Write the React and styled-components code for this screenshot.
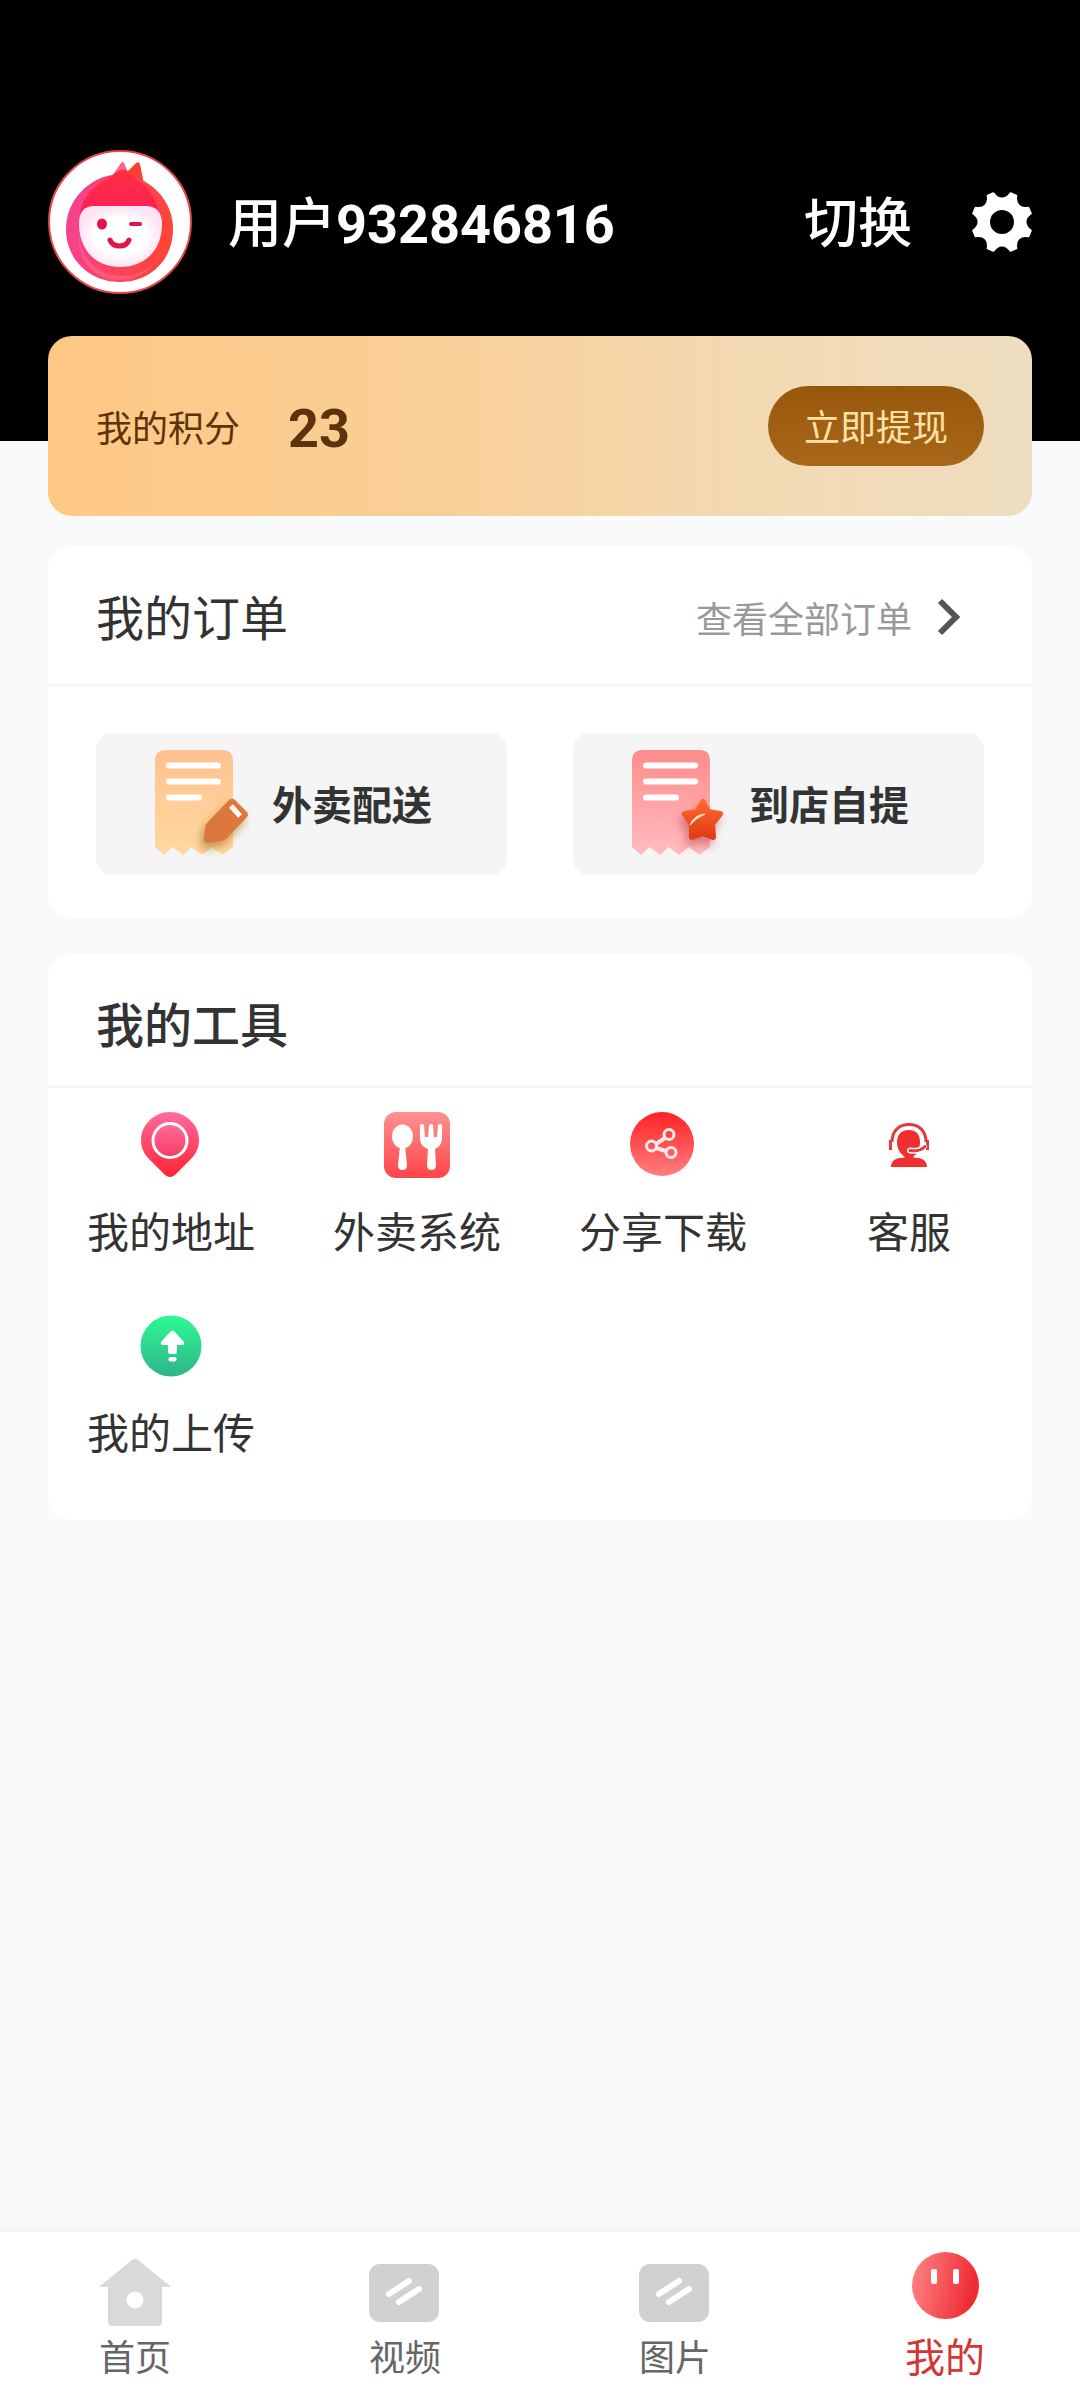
import React, {useState} from 'react';
import styled, {createGlobalStyle, css} from 'styled-components';

const colors = {
	page: '#f8fafc',
	card: '#fff',
	text: '#333',
	muted: '#999',
	tab: '#666',
	active: '#d43535',
	line: '#f5f5f5'
};

const GlobalStyle = createGlobalStyle`
	* {
		box-sizing: border-box;
	}
	body {
		margin: 0;
		background: ${colors.page};
		color: ${colors.text};
		font-family: Roboto, 'Noto Sans CJK SC', sans-serif;
	}
	button {
		padding: 0;
		border: 0;
		background: none;
		color: inherit;
		font: inherit;
		cursor: pointer;
	}
	svg {
		display: block;
		flex-shrink: 0;
	}
`;

const Page = styled.div`
	display: flex;
	flex-direction: column;
	min-height: 100vh;
`;

const Header = styled.header`
	display: flex;
	align-items: center;
	padding: 150px 48px 147px;
	background: #000;
	color: #fff;
	font-size: 54px;
	font-weight: 500;
	line-height: 72px;
`;

const UserName = styled.h1`
	flex: 1;
	margin: 0 0 0 36px;
	padding-top: 6px;
	font-size: inherit;
	font-weight: inherit;
`;

const Digits = styled.span`
	font-weight: 700;
`;

const SwitchButton = styled.button`
	padding-top: 6px;
`;

const SettingsButton = styled.button`
	margin-left: 60px;
`;

const Main = styled.main`
	flex: 1;
	margin-top: -105px;
	padding: 0 48px 48px;
`;

const Points = styled.section`
	display: flex;
	align-items: center;
	height: 180px;
	padding: 0 48px;
	border-radius: 24px;
	background: linear-gradient(90deg, #ffc884, #f9cf97 40%, #f3d9b1 70%, #eeddc0);
	color: #5c330a;
	font-size: 36px;
`;

const PointsValue = styled.strong`
	flex: 1;
	margin-left: 48px;
	padding-top: 4px;
	font-size: 54px;
	font-weight: 700;
`;

const CashOut = styled.button`
	height: 80px;
	padding: 0 36px 2px;
	border-radius: 40px;
	background: linear-gradient(#98570b, #a8671a);
	color: #ffe1a8;
`;

const Card = styled.section`
	margin-top: ${props => props.$gap}px;
	border-radius: 24px;
	background: ${colors.card};
`;

const CardHead = styled.div`
	display: flex;
	align-items: center;
	justify-content: space-between;
	padding: ${props => props.$compact ? '37px 72px 22px 48px' : '38px 72px 28px 48px'};
	border-bottom: 3px solid ${colors.line};
`;

const CardTitle = styled.h2`
	margin: 0;
	font-size: 48px;
	font-weight: ${props => props.$strong ? 500 : 400};
	line-height: 72px;
`;

const MoreLink = styled.a`
	display: flex;
	align-items: center;
	gap: 24px;
	padding-bottom: 6px;
	color: ${colors.muted};
	font-size: 36px;
	text-decoration: none;
`;

const Orders = styled.div`
	display: grid;
	grid-template-columns: 1fr 1fr;
	gap: 66px;
	padding: 46px 48px 43px;
`;

const OrderButton = styled.button`
	display: flex;
	align-items: center;
	gap: 22px;
	height: 142px;
	padding: 0 0 2px 58px;
	border-radius: 16px;
	background: ${colors.line};
	font-size: 40px;
	font-weight: 700;
`;

const Tools = styled.div`
	display: grid;
	grid-template-columns: repeat(4, 1fr);
	padding-bottom: 30px;
`;

const ToolButton = styled.button`
	display: flex;
	flex-direction: column;
	align-items: center;
	gap: 26px;
	padding: 24px 0 25px;
	font-size: 42px;
	line-height: 60px;
`;

const TabBar = styled.nav`
	position: sticky;
	bottom: 0;
	display: grid;
	grid-template-columns: repeat(4, 1fr);
	background: ${colors.card};
	box-shadow: 0 0 9px rgba(0, 0, 0, 0.08);
`;

const Tab = styled.button`
	display: flex;
	flex-direction: column;
	align-items: center;
	gap: 2px;
	padding: 18px 0 14px;
	color: ${colors.tab};
	font-size: 36px;
	line-height: 54px;

	${props => props.$active && css`
		color: ${colors.active};
		font-size: 40px;
	`}
`;

const Gradient = ({id, from, to, across}) => (
	<linearGradient id={id} x1="0" y1="0" x2={across ? 1 : 0} y2={across ? 0.2 : 1}>
		<stop offset="0" stopColor={from}/>
		<stop offset="1" stopColor={to}/>
	</linearGradient>
);

const Avatar = () => (
	<svg width="144" height="144" viewBox="0 0 144 144" role="img" aria-label="头像">
		<defs>
			<Gradient id="ring" from="#f5429a" to="#ff4438" across/>
			<Gradient id="hair" from="#ff3040" to="#fb1f56"/>
			<radialGradient id="face">
				<stop offset="0.6" stopColor="#fff"/>
				<stop offset="1" stopColor="#ffe3f4"/>
			</radialGradient>
		</defs>
		<circle cx="72" cy="72" r="71" fill="#fff" stroke="#e0474a" strokeWidth="2"/>
		<path d="M62 29 73 13q2-2 3 0l7 16z" fill="#f8688c"/>
		<path d="M77 24 88 13q3-2 4 1l4 20-18-4z" fill="#fb3f31"/>
		<path d="M71 24c31 2 54 26 54 55 0 31-23 53-53 53S18 110 18 79c0-29 23-53 53-55z" fill="url(#ring)"/>
		<path d="M31 84c2 29 22 42 44 42 18 0 32-10 39-25-8 20-26 29-43 29-24 0-42-19-40-46z" fill="#ff6f93" opacity="0.5"/>
		<path d="M32 64C36 40 52 34 63 26c6-4 11-9 16-5 7 8 28 16 32 43z" fill="url(#hair)"/>
		<path d="M46 56h52c10 0 16 6 16 18 0 26-17 43-42 43S31 99 31 74c0-12 5-18 15-18z" fill="url(#face)"/>
		<ellipse cx="54" cy="74" rx="5" ry="5.500" fill="#e2144a"/>
		<path d="M83 74h9" stroke="#e2144a" strokeWidth="4" strokeLinecap="round"/>
		<path d="M62 90c3 8 16 8 19 0" fill="none" stroke="#e2144a" strokeWidth="5" strokeLinecap="round"/>
	</svg>
);

const polar = (radius, degrees) => {
	const a = degrees * Math.PI / 180;
	return `${(30 + radius * Math.cos(a)).toFixed(2)} ${(30 + radius * Math.sin(a)).toFixed(2)}`;
};

// eight teeth with a rounded dip between each pair
const gearPath = [0, 1, 2, 3, 4, 5, 6, 7].map(i => {
	const mid = 22.5 + i * 45;
	return `${i ? 'L' : 'M'}${polar(30, mid - 6)}L${polar(30, mid + 6)}C${polar(22, mid + 13)} ${polar(22, mid + 32)} ${polar(30, mid + 39)}`;
}).join('') + 'z';

const GearIcon = () => (
	<svg width="60" height="60" viewBox="0 0 60 60">
		<path d={gearPath} fill="#fff" stroke="#fff" strokeWidth="2" strokeLinejoin="round"/>
		<circle cx="30" cy="30" r="12" fill="#000"/>
	</svg>
);

const ChevronIcon = () => (
	<svg width="24" height="38" viewBox="0 0 24 38">
		<path d="M4 3l16 16L4 35" fill="none" stroke="#555" strokeWidth="6"/>
	</svg>
);

const Receipt = ({id, from, to, shadow, children}) => (
	<svg width="96" height="110" viewBox="0 0 96 110">
		<defs>
			<Gradient id={id} from={from} to={to}/>
			<filter id={`${id}Shadow`} x="-50%" y="-50%" width="200%" height="200%">
				<feDropShadow dx="-3" dy="6" stdDeviation="5" floodColor={shadow} floodOpacity="0.6"/>
			</filter>
		</defs>
		<path
			d="M12 2h56q11 0 11 11v86l-10.500 8L58 99l-10 8-10.500-8-8.500 8-10.500-8-8.500 8-9-8V13Q1 2 12 2z"
			fill={`url(#${id})`}
		/>
		<path d="M15 17.500h49M15 33.500h49M15 49.500h30" stroke="#fff" strokeWidth="6" strokeLinecap="round"/>
		<g filter={`url(#${id}Shadow)`}>{children}</g>
	</svg>
);

const DeliveryIcon = () => (
	<Receipt id="delivery" from="#ffc18e" to="#ffd9a2" shadow="#a06a10">
		<defs>
			<Gradient id="pencil" from="#d9743f" to="#de7a3c" across/>
		</defs>
		<path d="M75 52q3-3 6 0l12 12q2 3 0 5L73 90q-2 2-5 3l-14 2q-4 0-4-4l1-11q0-3 3-6z" fill="url(#pencil)"/>
		<path d="M77 58l9 10" stroke="#fff" strokeWidth="5"/>
	</Receipt>
);

const PickupIcon = () => (
	<Receipt id="pickup" from="#ff8b8b" to="#ffbcc0" shadow="#c04450">
		<defs>
			<Gradient id="star" from="#fa6a2a" to="#e23c17"/>
		</defs>
		<path
			d="M72 54l5 10 12 2-8 10 1 13-10-4-11 4 0-13-7-10 12-2z"
			fill="#ee5220"
			stroke="url(#star)"
			strokeWidth="6"
			strokeLinejoin="round"
		/>
		<path d="M72 54l5 10 12 2-8 10 1 13-10-4-11 4 0-13-7-10 12-2z" fill="url(#star)"/>
		<path d="M59 77q4-10 15-11-9 4-15 11z" fill="#ffe9e0" stroke="#ffd5c5"/>
	</Receipt>
);

const AddressIcon = () => (
	<svg width="66" height="66" viewBox="0 0 66 66">
		<defs>
			<Gradient id="pin" from="#ff6ba0" to="#ff2530"/>
			<Gradient id="pinDot" from="#ff6d99" to="#f43c62"/>
		</defs>
		<path d="M32 0c16 0 29 13 29 28 0 9-4 15-9 20L37 63q-5 4-10 0L12 48C6 42 3 36 3 28 3 13 16 0 32 0z" fill="url(#pin)"/>
		<circle cx="32" cy="28.500" r="17" fill="url(#pinDot)" stroke="#fff" strokeWidth="3"/>
	</svg>
);

const TakeoutIcon = () => (
	<svg width="66" height="66" viewBox="0 0 66 66">
		<defs>
			<Gradient id="takeout" from="#ff9292" to="#ff4548"/>
		</defs>
		<rect width="66" height="66" rx="12" fill="url(#takeout)"/>
		<ellipse cx="18.500" cy="24.500" rx="10.500" ry="12" fill="#fff"/>
		<path d="M16 34h5l2 19q0 5-4.500 5t-4.500-5z" fill="#fff"/>
		<path d="M36 13q2-2 4 0l1 12h3l1-12q2-2 4 0l1 12h3l1-12q2-2 4 0v13c0 6-3 9-7 11l1 16q0 5-4.500 5t-4.500-5l1-16c-5-2-8-5-8-11z" fill="#fff"/>
	</svg>
);

const ShareIcon = () => (
	<svg width="66" height="66" viewBox="0 0 66 66">
		<defs>
			<Gradient id="share" from="#ff2226" to="#ff7e80"/>
		</defs>
		<circle cx="32" cy="32" r="32" fill="url(#share)"/>
		<g fill="none" stroke="#ffe9e9" strokeWidth="3">
			<path d="M26 32l9-6M26 36l10 3" strokeWidth="4"/>
			<circle cx="39" cy="22.500" r="5"/>
			<circle cx="21.500" cy="34" r="5"/>
			<circle cx="41" cy="40.500" r="5"/>
		</g>
	</svg>
);

const ServiceIcon = () => (
	<svg width="66" height="66" viewBox="0 0 66 66">
		<path d="M16 30C16 19 23 12.500 33 12.500S50 19 50 30" fill="none" stroke="#e23b3b" strokeWidth="3"/>
		<path d="M14.500 28v10M51.500 28v10" stroke="#d84040" strokeWidth="3"/>
		<path d="M21 30c0-8 5-12 12-12s11 4 11 12c0 8-3 12-7 15 1 1 4 1 6 1 5 1 8 4 8 9H15c0-5 3-8 8-9 2 0 5 0 6-1-4-3-8-7-8-15z" fill="#f03030"/>
		<path d="M34 38.500c6 1 11 0 14-4" fill="none" stroke="#fff" strokeWidth="6" strokeLinecap="round"/>
		<path d="M34 38.500c6 1 11 0 15-4" fill="none" stroke="#e23b3b" strokeWidth="3" strokeLinecap="round"/>
	</svg>
);

const UploadIcon = () => (
	<svg width="66" height="66" viewBox="0 0 66 66">
		<defs>
			<Gradient id="upload" from="#2dfa92" to="#2fb48a"/>
		</defs>
		<circle cx="33" cy="33" r="30.500" fill="url(#upload)"/>
		<path d="M33 18q1.500-1 3 0l10 11q1 3-2 3h-5v7q0 2-2 2h-5q-2 0-2-2v-7h-5q-3 0-2-3z" fill="#fff"/>
		<rect x="30.500" y="44" width="8" height="4.500" rx="2" fill="#fff"/>
	</svg>
);

const HomeIcon = () => (
	<svg width="80" height="80" viewBox="0 0 80 80">
		<path d="M37 10q3-2 6 0l32 26v1h-8v35q0 4-4 4H17q-4 0-4-4V37H5v-1z" fill="#d9d9d9"/>
		<circle cx="40" cy="50" r="8.500" fill="#fff"/>
	</svg>
);

const MediaIcon = () => (
	<svg width="80" height="80" viewBox="0 0 80 80">
		<rect x="4" y="14" width="70" height="58" rx="11" fill="#d1d1d1"/>
		<path d="M24 44l20-13M34 52l20-13" stroke="#fff" strokeWidth="6" strokeLinecap="round"/>
	</svg>
);

const MineIcon = () => (
	<svg width="80" height="80" viewBox="0 0 80 80">
		<defs>
			<Gradient id="mine" from="#ff8686" to="#ee2a33" across/>
		</defs>
		<circle cx="40.500" cy="35.500" r="33.500" fill="url(#mine)"/>
		<rect x="26" y="19" width="6" height="15" rx="2" fill="#fff"/>
		<rect x="48" y="19" width="6" height="15" rx="2" fill="#fff"/>
	</svg>
);

const orders = [
	{label: '外卖配送', Icon: DeliveryIcon},
	{label: '到店自提', Icon: PickupIcon}
];

const tools = [
	{label: '我的地址', Icon: AddressIcon},
	{label: '外卖系统', Icon: TakeoutIcon},
	{label: '分享下载', Icon: ShareIcon},
	{label: '客服', Icon: ServiceIcon},
	{label: '我的上传', Icon: UploadIcon}
];

const tabs = [
	{label: '首页', Icon: HomeIcon},
	{label: '视频', Icon: MediaIcon},
	{label: '图片', Icon: MediaIcon},
	{label: '我的', Icon: MineIcon}
];

export default function App() {
	const [activeTab, setActiveTab] = useState('我的');

	return (
		<Page>
			<GlobalStyle/>
			<Header>
				<Avatar/>
				<UserName>用户<Digits>932846816</Digits></UserName>
				<SwitchButton type="button">切换</SwitchButton>
				<SettingsButton type="button" aria-label="设置">
					<GearIcon/>
				</SettingsButton>
			</Header>
			<Main>
				<Points>
					<span>我的积分</span>
					<PointsValue>23</PointsValue>
					<CashOut type="button">立即提现</CashOut>
				</Points>
				<Card $gap={30}>
					<CardHead>
						<CardTitle>我的订单</CardTitle>
						<MoreLink href="#orders">
							查看全部订单
							<ChevronIcon/>
						</MoreLink>
					</CardHead>
					<Orders>
						{orders.map(({label, Icon}) => (
							<OrderButton key={label} type="button">
								<Icon/>
								{label}
							</OrderButton>
						))}
					</Orders>
				</Card>
				<Card $gap={36}>
					<CardHead $compact>
						<CardTitle $strong>我的工具</CardTitle>
					</CardHead>
					<Tools>
						{tools.map(({label, Icon}) => (
							<ToolButton key={label} type="button">
								<Icon/>
								{label}
							</ToolButton>
						))}
					</Tools>
				</Card>
			</Main>
			<TabBar>
				{tabs.map(({label, Icon}) => (
					<Tab
						key={label}
						type="button"
						$active={label === activeTab}
						onClick={() => setActiveTab(label)}
					>
						<Icon/>
						{label}
					</Tab>
				))}
			</TabBar>
		</Page>
	);
};
